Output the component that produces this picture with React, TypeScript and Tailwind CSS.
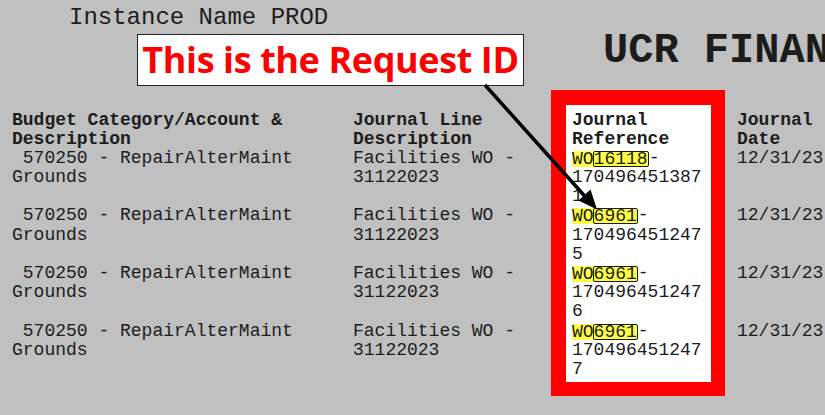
const mono = "font-['Liberation_Mono','Courier_New',monospace]"

type Row = {
    account: string[]
    line: string[]
    ref: [string, string, string]
    date: string
}

const rows: Row[] = [
    { account: [' 570250 - RepairAlterMaint', 'Grounds'], line: ['Facilities WO -', '31122023'], ref: ['16118', '170496451387', '1'], date: '12/31/23' },
    { account: [' 570250 - RepairAlterMaint', 'Grounds'], line: ['Facilities WO -', '31122023'], ref: ['6961', '170496451247', '5'], date: '12/31/23' },
    { account: [' 570250 - RepairAlterMaint', 'Grounds'], line: ['Facilities WO -', '31122023'], ref: ['6961', '170496451247', '6'], date: '12/31/23' },
    { account: [' 570250 - RepairAlterMaint', 'Grounds'], line: ['Facilities WO -', '31122023'], ref: ['6961', '170496451247', '7'], date: '12/31/23' },
]

// one cell = 3 lines tall so every column stays in step
const Cell = ({ lines }: { lines: React.ReactNode[] }) => (
    <div className="h-[57.6px]">
        {lines.map((l, i) => (
            <div key={i} className="h-[19.2px] whitespace-pre">{l}</div>
        ))}
    </div>
)

const Header = ({ a, b }: { a: string, b: string }) => (
    <div className="font-bold">
        <div className="h-[19.2px] whitespace-pre">{a}</div>
        <div className="h-[19.2px] whitespace-pre">{b}</div>
    </div>
)

const RefId = ({ id }: { id: string }) => (
    <span className="whitespace-pre">
        <span className="inline-block h-[16px] leading-[16px] bg-[#ffff45] align-top mt-[2px]">WO</span>
        <span className="inline-block h-[16px] leading-[14px] bg-[#ffff45] border border-[#1a1a1a] rounded-[2px] -ml-px align-top mt-[2px]">{id}</span>
        <span>-</span>
    </span>
)

const App = () => {
    return (
        <div className={"relative w-[825px] h-[415px] overflow-hidden bg-[#c0c0c0] text-[#1c1c1c] " + mono}>
            <div className="h-[90px]">
                <div className="pl-[69px] pt-[4px] text-[24px] leading-[28px] whitespace-pre">Instance Name PROD</div>
                <div className="w-[825px] pl-[603px] -mt-[4px] text-[42px] leading-[46px] font-bold whitespace-nowrap overflow-hidden">UCR FINAN</div>
            </div>

            <div className="flex items-start text-[18px] leading-[19.2px]">
                <div className="w-[341px] ml-[12px] pt-[20.5px]">
                    <Header a="Budget Category/Account &" b="Description" />
                    {rows.map((r, i) => <Cell key={i} lines={r.account} />)}
                </div>
                <div className="w-[198px] pt-[20.5px]">
                    <Header a="Journal Line" b="Description" />
                    {rows.map((r, i) => <Cell key={i} lines={r.line} />)}
                </div>
                <div className="w-[174px] h-[306px] border-[14px] border-t-[15px] border-l-[15px] border-[#ff0000] bg-white pt-[5.5px] pl-[6px]">
                    <Header a="Journal" b="Reference" />
                    {rows.map((r, i) => <Cell key={i} lines={[<RefId id={r.ref[0]} />, r.ref[1], r.ref[2]]} />)}
                </div>
                <div className="ml-[12px] pt-[20.5px]">
                    <Header a="Journal" b="Date" />
                    {rows.map((r, i) => <Cell key={i} lines={[r.date]} />)}
                </div>
            </div>

            {/* callout */}
            <div className="absolute left-[137px] top-[34px] w-[387px] h-[52px] bg-white border-[1.5px] border-[#222] flex items-center justify-center">
                <span className="font-['Open_Sans',sans-serif] font-bold text-[36px] leading-none text-[#ff0000] tracking-[-0.4px] whitespace-nowrap">This is the Request ID</span>
            </div>
            <svg className="absolute left-0 top-0 pointer-events-none" width="825" height="415">
                <line x1="485" y1="85" x2="586" y2="197.5" stroke="#000" strokeWidth="3.5" />
                <polygon points="597,209.5 578.5,200.5 590.5,189.5" fill="#000" />
            </svg>
        </div>
    )
}

export default App
